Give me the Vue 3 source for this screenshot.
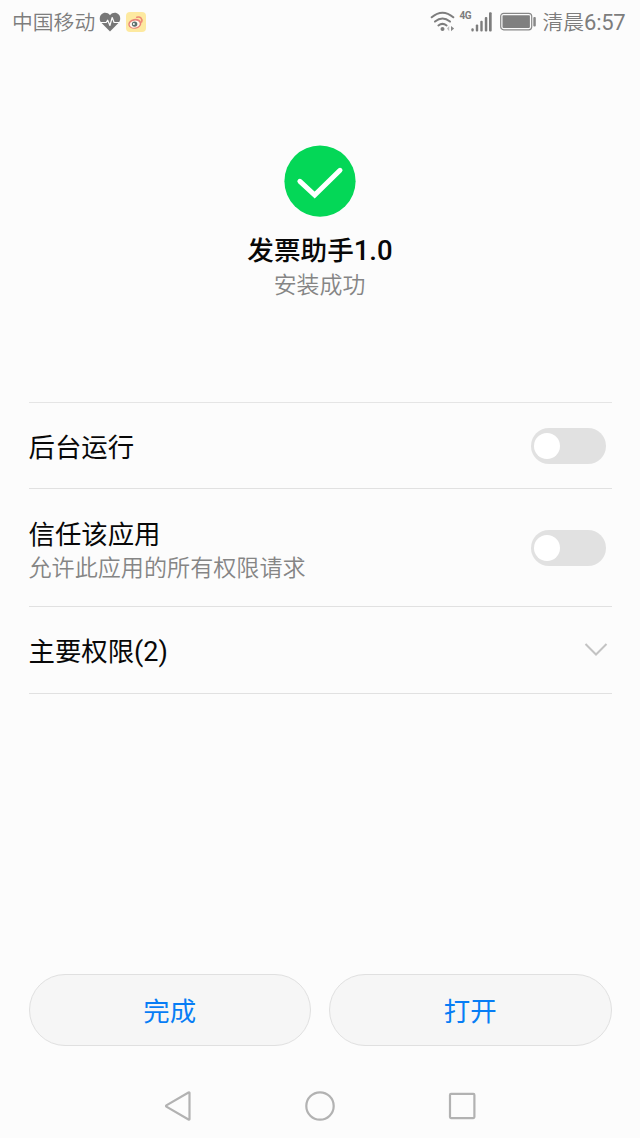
<script setup>
import { ref } from 'vue'

const background = ref(false)
const trusted = ref(false)
</script>

<template>
  <div class="screen">
    <header class="status">
      <span class="carrier">中国移动</span>
      <svg class="heart" width="22" height="20" viewBox="0 0 22 20">
        <path d="M11 19.400 2.300 10.800C.2 8.500.3 4.600 2.300 2.500 4.700.1 8.700.3 11 3.300 13.300.3 17.300.1 19.700 2.500c2 2.100 2.100 6 0 8.300Z" fill="#777" />
        <path d="M1 10.500h6.200l1.500-2.300 2.200 5.300 2.300-8 1.900 5H21" fill="none" stroke="#fcfcfc" stroke-width="1.200" stroke-linejoin="round" />
      </svg>
      <svg class="weibo" width="20" height="20" viewBox="0 0 20 20">
        <rect width="20" height="20" rx="4" fill="#fde9a0" />
        <ellipse cx="8.800" cy="11.800" rx="6.600" ry="4.900" fill="#e9837a" transform="rotate(-10 8.800 11.800)" />
        <ellipse cx="8.700" cy="12.100" rx="5.100" ry="3.500" fill="#fff6ed" transform="rotate(-10 8.700 12)" />
        <circle cx="8.600" cy="12.100" r="2.700" fill="#5d706e" />
        <circle cx="7.900" cy="11.900" r="1" fill="#fff" />
        <path d="M10.800 5.300c3.400-1.200 6.100 1.500 4.800 4.700" fill="none" stroke="#ee8a74" stroke-width="1.600" stroke-linecap="round" />
      </svg>
      <span class="spacer"></span>
      <svg class="wifi" width="26" height="22" viewBox="0 0 26 22">
        <g fill="none" stroke="#7d7d7d" stroke-width="2" stroke-linecap="round">
          <path d="M1.700 6.300Q12.500-2.800 23.300 6.300" />
          <path d="M5 10.600Q12.500 4.400 20 10.600" />
          <path d="M8.400 14.500q4.100-3.200 8.200 0" />
        </g>
        <circle cx="12.500" cy="18" r="2" fill="#7d7d7d" />
        <path d="m19.200 15-2.200 2.600 2.200 2.600Z" fill="#bbb" />
        <path d="m21 15 3.100 2.600-3.100 2.600Z" fill="#888" />
      </svg>
      <span class="network">4G</span>
      <svg class="signal" width="22" height="22" viewBox="11 0 22 22">
        <g fill="#7d7d7d">
          <rect x="11.400" y="17.300" width="2.300" height="3.200" rx="1" />
          <rect x="15.800" y="13.500" width="2.400" height="7" rx="1" />
          <rect x="20.300" y="9.800" width="2.400" height="10.700" rx="1" />
          <rect x="24.800" y="6" width="2.500" height="14.500" rx="1" />
          <rect x="29" y="1.200" width="2.700" height="19.300" rx="1" />
        </g>
      </svg>
      <svg class="battery" width="37" height="20" viewBox="0 0 37 20">
        <rect x=".7" y="1.300" width="31" height="16.500" rx="3" fill="none" stroke="#888" stroke-width="1.200" />
        <rect x="2.500" y="3.200" width="27.400" height="12.700" rx=".8" fill="#808080" />
        <rect x="33.300" y="5" width="2.500" height="9.500" rx="1" fill="#888" />
      </svg>
      <span class="time">清晨<span class="digits">6:57</span></span>
    </header>

    <section class="result">
      <svg width="72" height="72" viewBox="0 0 72 72">
        <circle cx="36" cy="36.200" r="35.600" fill="#04d757" />
        <path d="M15.900 36.300 30.700 50 56 25.300" fill="none" stroke="#fff" stroke-width="5" stroke-linecap="round" />
      </svg>
      <h1>发票助手<span class="version">1.0</span></h1>
      <p>安装成功</p>
    </section>

    <main class="settings">
      <div class="row first">
        <span class="label">后台运行</span>
        <button class="switch" :class="{ on: background }" @click="background = !background"><i></i></button>
      </div>
      <div class="row trust">
        <div>
          <div class="label">信任该应用</div>
          <div class="hint">允许此应用的所有权限请求</div>
        </div>
        <button class="switch" :class="{ on: trusted }" @click="trusted = !trusted"><i></i></button>
      </div>
      <div class="row permissions">
        <span class="label">主要权限<span class="count">(2)</span></span>
        <svg width="24" height="16" viewBox="0 0 24 16">
          <path d="m1.500 2 10.500 10.500 10.500-10.500" fill="none" stroke="#c3c3c3" stroke-width="2" />
        </svg>
      </div>
    </main>

    <footer class="actions">
      <button>完成</button>
      <button>打开</button>
    </footer>

    <nav class="nav">
      <svg width="32" height="32" viewBox="0 0 32 32"><path d="M27.500 3v26Q27.500 30 26.500 29.500L4.400 16.700Q3.600 16 4.400 15.300L26.500 2.500Q27.500 2 27.500 3Z" /></svg>
      <svg width="32" height="32" viewBox="0 0 32 32"><circle cx="16" cy="16" r="13.700" /></svg>
      <svg width="32" height="32" viewBox="0 0 32 32"><rect x="4" y="3.900" width="24.400" height="24.200" rx="1" /></svg>
    </nav>
  </div>
</template>

<style>
body { background: #fcfcfc; }
</style>

<style scoped>
.screen {
  box-sizing: border-box;
  width: 640px;
  height: 1138px;
  display: flex;
  flex-direction: column;
  overflow: hidden;
  background: #fcfcfc;
  color: #080808;
  font-family: Roboto, "Noto Sans CJK SC", sans-serif;
}
.status {
  height: 44px;
  flex: none;
  box-sizing: border-box;
  padding: 0 15px 0 12px;
  display: flex;
  align-items: center;
  color: #7d7d7d;
  font-size: 20.800px;
  line-height: 42px;
  white-space: nowrap;
}
.carrier { width: 86.500px; padding-top: 2px; font-weight: 350; }
.weibo { margin-left: 5px; }
.spacer { flex: 1; }
.network {
  width: 11px;
  margin: 0 0 12px 4px;
  font: 700 10px/12px "Liberation Sans Narrow", Roboto, sans-serif;
  letter-spacing: -.6px;
}
.battery { margin: 0 6px 0 7px; }
.time { width: 82.500px; padding-top: 2px; font-weight: 350; }
.digits { font-size: 22px; font-weight: 400; letter-spacing: -.3px; }
.result {
  height: 358px;
  flex: none;
  box-sizing: border-box;
  padding-top: 101px;
  display: flex;
  flex-direction: column;
  align-items: center;
}
h1 { margin: 15px 0 0; font-size: 26.600px; line-height: 38px; font-weight: 500; }
.version { font-size: 27.500px; }
p { margin: 0 1px 0 0; color: #858585; font-size: 22.900px; line-height: 32px; font-weight: 350; }
.settings { width: 583px; margin-left: 28.500px; flex: none; border-top: 1px solid #e5e5e5; }
.row {
  box-sizing: border-box;
  display: flex;
  justify-content: space-between;
  align-items: center;
  padding-right: 5.500px;
  border-bottom: 1px solid #e1e1e1;
}
.first { height: 86px; }
.first .label { padding-top: 5px; }
.trust { height: 117.500px; padding-top: 1px; }
.trust .label { padding-top: 3px; }
.permissions { height: 87px; padding-right: 4px; }
.permissions .label { padding-top: 4px; }
.label { font-size: 26.400px; line-height: 38px; }
.count { font-size: 27px; }
.hint { color: #858585; font-size: 23.100px; line-height: 29px; font-weight: 350; }
.switch {
  width: 75px;
  height: 36px;
  padding: 5px 3px;
  border: 0;
  border-radius: 18px;
  background: #e1e1e1;
  display: flex;
}
.switch i { width: 26px; height: 26px; border-radius: 50%; background: #fff; }
.switch.on { justify-content: flex-end; background: #007dff; }
.actions { margin: auto 28.500px 0; display: flex; gap: 18px; }
.actions button {
  flex: 1;
  box-sizing: border-box;
  height: 72px;
  padding: 4px 0 0;
  border: 1px solid #e0e0e0;
  border-radius: 36px;
  background: #f6f6f6;
  color: #077df5;
  font: 26.400px/66px Roboto, "Noto Sans CJK SC", sans-serif;
}
.nav {
  height: 92px;
  flex: none;
  box-sizing: border-box;
  padding: 28px 162px 0;
  display: flex;
  justify-content: space-between;
  align-items: center;
}
.nav svg { fill: none; stroke: #b2b2b2; stroke-width: 2.200; }
</style>
